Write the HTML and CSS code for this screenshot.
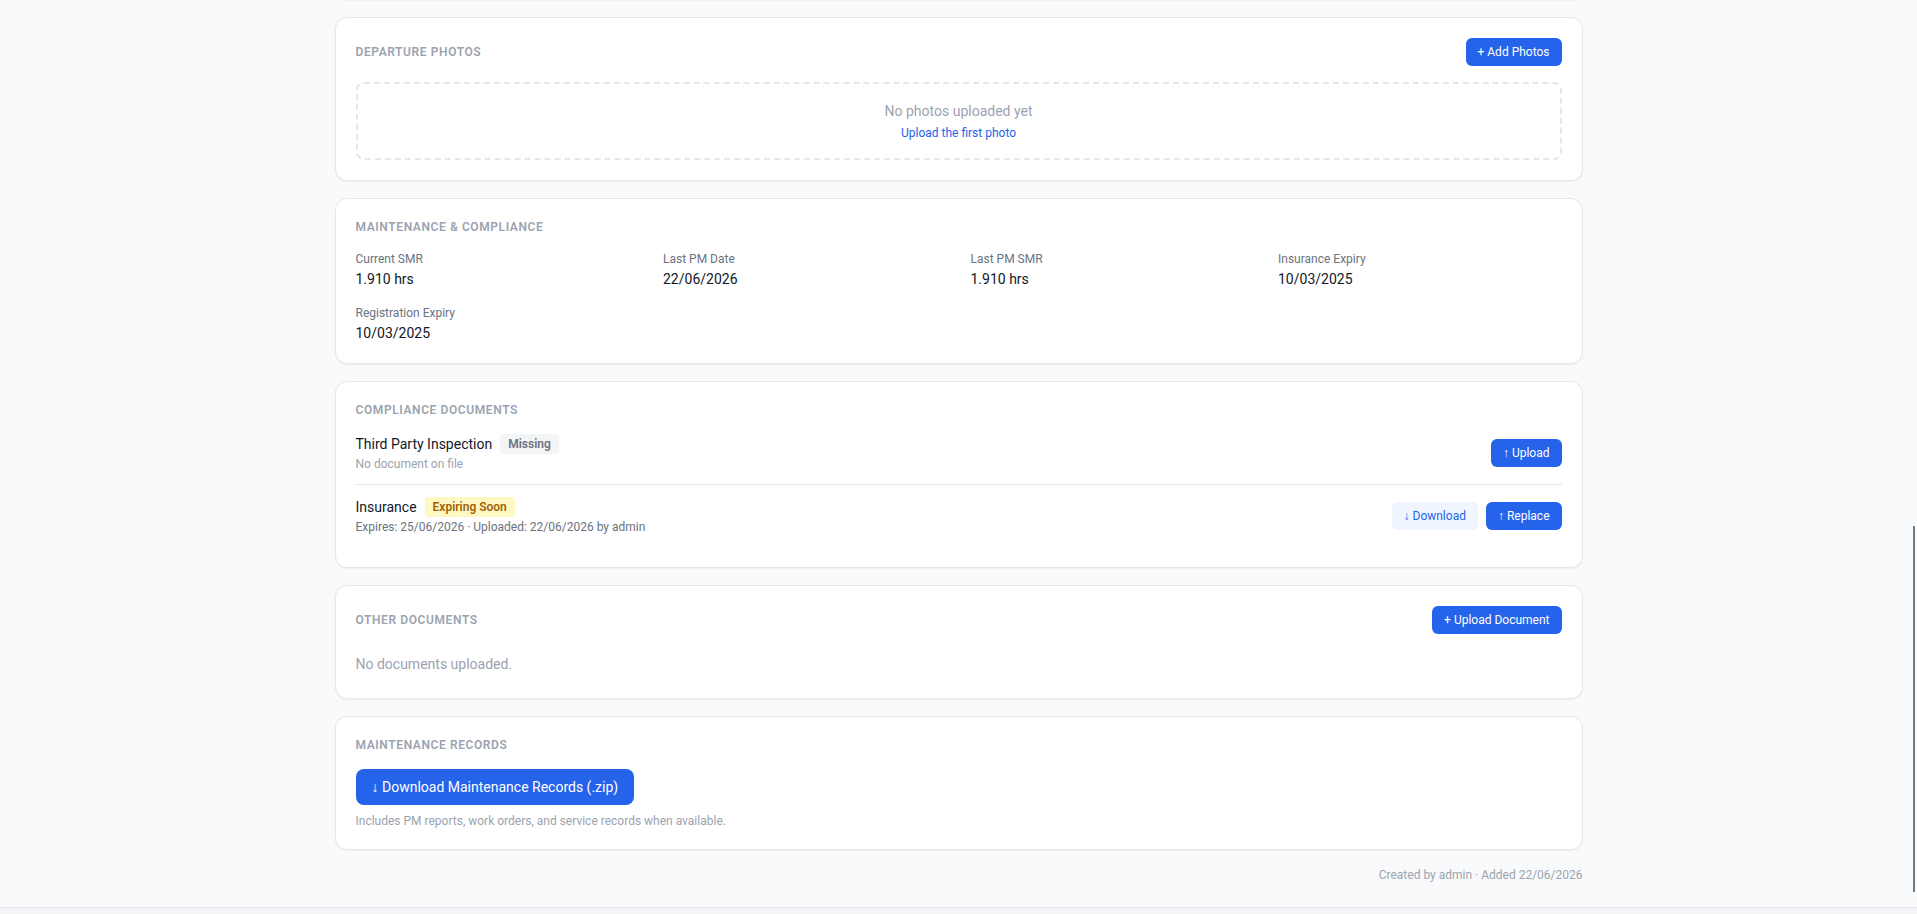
FILE: index.html
```html
<!DOCTYPE html>
<html>
<head>
    <title>Equipment Details</title>
    <link rel="stylesheet" href="styles.css">
</head>
<body>
    <div id="contenido">
        <!-- end of the card above (scrolled out of view) -->
        <div class="card card-tail"></div>

        <section class="card">
            <div class="card-header">
                <h2 class="card-title">Departure Photos</h2>
                <button class="btn btn-primary">+ Add Photos</button>
            </div>
            <div class="dropzone">
                <p class="dropzone-text">No photos uploaded yet</p>
                <a href="#" class="dropzone-link">Upload the first photo</a>
            </div>
        </section>

        <section class="card">
            <h2 class="card-title title-spaced">Maintenance &amp; Compliance</h2>
            <div class="fields">
                <div class="field">
                    <div class="field-label">Current SMR</div>
                    <div class="field-value">1.910 hrs</div>
                </div>
                <div class="field">
                    <div class="field-label">Last PM Date</div>
                    <div class="field-value">22/06/2026</div>
                </div>
                <div class="field">
                    <div class="field-label">Last PM SMR</div>
                    <div class="field-value">1.910 hrs</div>
                </div>
                <div class="field">
                    <div class="field-label">Insurance Expiry</div>
                    <div class="field-value">10/03/2025</div>
                </div>
                <div class="field">
                    <div class="field-label">Registration Expiry</div>
                    <div class="field-value">10/03/2025</div>
                </div>
            </div>
        </section>

        <section class="card">
            <h2 class="card-title title-list">Compliance Documents</h2>
            <div class="doc-list">
                <div class="doc-row">
                    <div class="doc-info">
                        <div class="doc-name">
                            Third Party Inspection
                            <span class="badge badge-gray">Missing</span>
                        </div>
                        <div class="doc-meta doc-meta-empty">No document on file</div>
                    </div>
                    <div class="doc-actions">
                        <button class="btn btn-primary">&#8593; Upload</button>
                    </div>
                </div>
                <div class="doc-row">
                    <div class="doc-info">
                        <div class="doc-name">
                            Insurance
                            <span class="badge badge-yellow">Expiring Soon</span>
                        </div>
                        <div class="doc-meta">Expires: 25/06/2026 · Uploaded: 22/06/2026 by admin</div>
                    </div>
                    <div class="doc-actions">
                        <button class="btn btn-light">&#8595; Download</button>
                        <button class="btn btn-primary">&#8593; Replace</button>
                    </div>
                </div>
            </div>
        </section>

        <section class="card">
            <div class="card-header">
                <h2 class="card-title">Other Documents</h2>
                <button class="btn btn-primary">+ Upload Document</button>
            </div>
            <p class="empty-text">No documents uploaded.</p>
        </section>

        <section class="card">
            <h2 class="card-title title-spaced">Maintenance Records</h2>
            <button class="btn btn-large">&#8595; Download Maintenance Records (.zip)</button>
            <p class="hint">Includes PM reports, work orders, and service records when available.</p>
        </section>

        <p class="footer-note">Created by admin · Added 22/06/2026</p>
    </div>
    <div class="page-end"></div>
    <div class="scroll-thumb"></div>
</body>
</html>
```

FILE: styles.css
```css
body {
    font-family: 'Segoe UI', Roboto, 'Noto Sans', sans-serif;
    background-color: #f9fafb;
    color: #111827;
    margin: 0;
    overflow: hidden;
}
#contenido {
    max-width: 1248px;
    margin: 0 auto;
}
.card {
    background-color: #ffffff;
    border: 1px solid #e5e7eb;
    border-radius: 12px;
    box-shadow: 0 1px 2px rgba(0, 0, 0, 0.05);
    padding: 20px;
    margin-bottom: 17px;
}
.card-tail {
    height: 40px;
    margin-top: -40px;
    box-sizing: border-box;
    padding: 0;
}
.card-header {
    display: flex;
    justify-content: space-between;
    align-items: center;
    margin-bottom: 16px;
}
.card-title {
    margin: 0;
    font-size: 12px;
    line-height: 16px;
    font-weight: 600;
    letter-spacing: 0.05em;
    text-transform: uppercase;
    color: #9ca3af;
}
.title-spaced {
    margin-bottom: 16px;
}
.title-list {
    margin-bottom: 4px;
}
.btn {
    font-family: inherit;
    border: none;
    border-radius: 6px;
    cursor: pointer;
    font-size: 12px;
    line-height: 16px;
    padding: 6px 12px;
}
.btn-primary {
    background-color: #2563eb;
    color: #ffffff;
}
.btn-primary:hover {
    background-color: #1d4ed8;
}
.btn-light {
    background-color: #eff6ff;
    color: #2563eb;
}
.btn-large {
    background-color: #2563eb;
    color: #ffffff;
    font-size: 14px;
    line-height: 20px;
    padding: 8px 16px;
    border-radius: 8px;
}
.dropzone {
    border: 2px dashed #e5e7eb;
    border-radius: 8px;
    padding: 17px;
    text-align: center;
}
.dropzone-text {
    margin: 0;
    font-size: 14px;
    line-height: 20px;
    color: #9ca3af;
}
.dropzone-link {
    display: inline-block;
    margin-top: 4px;
    font-size: 12px;
    line-height: 16px;
    color: #2563eb;
    text-decoration: none;
}
.fields {
    display: grid;
    grid-template-columns: repeat(4, 1fr);
    gap: 16px 24px;
}
.field-label {
    font-size: 12px;
    line-height: 16px;
    color: #6b7280;
}
.field-value {
    margin-top: 2px;
    font-size: 14px;
    line-height: 20px;
    color: #111827;
}
.doc-row {
    display: flex;
    justify-content: space-between;
    align-items: center;
    padding: 12px 0;
}
.doc-row + .doc-row {
    border-top: 1px solid #e5e7eb;
}
.doc-name {
    display: flex;
    align-items: center;
    gap: 8px;
    font-size: 14px;
    line-height: 20px;
    color: #111827;
}
.doc-meta {
    margin-top: 2px;
    font-size: 12px;
    line-height: 16px;
    color: #6b7280;
}
.doc-meta-empty {
    color: #9ca3af;
}
.doc-actions {
    display: flex;
    gap: 8px;
}
.badge {
    font-size: 12px;
    line-height: 16px;
    font-weight: 600;
    padding: 2px 8px;
    border-radius: 4px;
}
.badge-gray {
    background-color: #f3f4f6;
    color: #6b7280;
}
.badge-yellow {
    background-color: #fef9c3;
    color: #a16207;
}
.empty-text {
    margin: 0;
    padding: 4px 0;
    font-size: 14px;
    line-height: 20px;
    color: #9ca3af;
}
.hint {
    margin: 8px 0 0;
    font-size: 12px;
    line-height: 16px;
    color: #9ca3af;
}
.footer-note {
    margin: 0;
    text-align: right;
    font-size: 12px;
    line-height: 16px;
    color: #9ca3af;
}
.page-end {
    margin-top: 24px;
    height: 20px;
    border-top: 1px solid #e5e7eb;
    background-color: #f3f4f6;
}
.scroll-thumb {
    position: fixed;
    top: 526px;
    right: 2px;
    width: 2px;
    height: 366px;
    background-color: #6e7a7f;
}
```
